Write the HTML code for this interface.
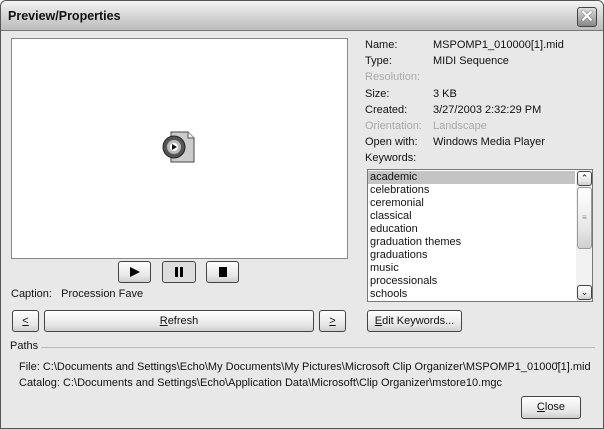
<!DOCTYPE html>
<html><head><style>
*{margin:0;padding:0;box-sizing:border-box}
body{width:604px;height:429px;overflow:hidden;background:#fff;font-family:"Liberation Sans",sans-serif;font-size:11px;color:#111}
.dlg{position:absolute;left:0;top:0;width:604px;height:429px;background:#e8e8e8;border:1px solid #555;border-radius:6px 6px 0 0}
.title{position:absolute;left:0;top:0;width:602px;height:30px;background:linear-gradient(#f4f4f4,#d0d0d0 60%,#bdbdbd);border-radius:6px 6px 0 0;border-bottom:1px solid #777}
.title span{position:absolute;left:7px;top:8px;font-weight:bold;font-size:12.5px}
.x{position:absolute;left:576px;top:6px;width:20px;height:20px;border:1px solid #444;border-radius:3px;background:linear-gradient(#ddd,#888);text-align:center;font-size:17px;line-height:18px;color:#fff;font-weight:bold;text-shadow:0 0 1px #000}
.abs{position:absolute;white-space:nowrap}
.btn{position:absolute;border:1px solid #444;border-radius:3px;background:linear-gradient(#fff,#e6e6e6 70%,#cfcfcf);text-align:center}
.g{color:#aaa}
</style></head><body><div class="dlg">
<div class="title"><span>Preview/Properties</span></div>
<div class="x">✕</div>
<div class="abs" style="left:10px;top:37px;width:337px;height:221px;background:#fff;border:1px solid #888"></div>
<svg class="abs" style="left:160px;top:128px" width="38" height="36">
<path d="M10 3h17l6 6v24H10z" fill="#ccc" stroke="#444"/><path d="M27 3v6h6" fill="#eee" stroke="#555"/>
<circle cx="13" cy="18" r="11" fill="#555" stroke="#222"/><circle cx="13" cy="18" r="7" fill="#bbb"/><circle cx="13" cy="18" r="4" fill="#fff"/><path d="M11 15l5 3-5 3z" fill="#111"/></svg>
<div class="btn" style="left:117px;top:260px;width:33px;height:22px"><svg width="31" height="20"><path d="M11 5l10 5-10 5z" fill="#000"/></svg></div>
<div class="btn" style="left:161px;top:260px;width:34px;height:22px;background:#ddd"><svg width="32" height="20"><rect x="12" y="5" width="3" height="10" fill="#000"/><rect x="17" y="5" width="3" height="10" fill="#000"/></svg></div>
<div class="btn" style="left:205px;top:260px;width:33px;height:22px"><svg width="31" height="20"><rect x="12" y="5" width="8" height="10" fill="#000"/></svg></div>
<div class="abs" style="left:10px;top:287px">Caption:&nbsp;&nbsp;&nbsp;Procession Fave</div>
<div class="btn" style="left:11px;top:309px;width:27px;height:22px;line-height:20px"><u>&lt;</u></div>
<div class="btn" style="left:43px;top:309px;width:270px;height:22px;line-height:20px"><u>R</u>efresh</div>
<div class="btn" style="left:318px;top:309px;width:27px;height:22px;line-height:20px"><u>&gt;</u></div>
<div class="btn" style="left:366px;top:309px;width:95px;height:22px;line-height:20px"><u>E</u>dit Keywords...</div>
<div class="abs" style="left:364px;top:36px;line-height:16.2px">Name:<br>Type:<br><span class="g">Resolution:</span><br>Size:<br>Created:<br><span class="g">Orientation:</span><br>Open with:</div>
<div class="abs" style="left:432px;top:36px;line-height:16.2px">MSPOMP1_010000[1].mid<br>MIDI Sequence<br>&nbsp;<br>3 KB<br>3/27/2003 2:32:29 PM<br><span class="g">Landscape</span><br>Windows Media Player</div>
<div class="abs" style="left:364px;top:151px">Keywords:</div>
<div class="abs" style="left:366px;top:168px;width:226px;height:133px;background:#fff;border:1px solid #777"></div>
<div class="abs" style="left:367px;top:170px;width:207px;height:13px;background:#c4c4c4"></div>
<div class="abs" style="left:369px;top:170px;line-height:13px">academic<br>celebrations<br>ceremonial<br>classical<br>education<br>graduation themes<br>graduations<br>music<br>processionals<br>schools</div>
<div class="abs" style="left:575px;top:169px;width:16px;height:131px;background:#f2f2f2"></div>
<div class="btn" style="left:576px;top:170px;width:15px;height:15px;font-size:9px;line-height:13px">⌃</div>
<div class="btn" style="left:576px;top:186px;width:15px;height:62px;border-color:#999;line-height:60px;font-size:8px;color:#888">≡</div>
<div class="btn" style="left:576px;top:284px;width:15px;height:15px;font-size:9px;line-height:12px">⌄</div>
<div class="abs" style="left:9px;top:339px">Paths</div>
<div class="abs" style="left:40px;top:346px;width:554px;height:1px;background:#bbb"></div>
<div class="abs" style="left:18px;top:358px;line-height:16px">File: C:\Documents and Settings\Echo\My Documents\My Pictures\Microsoft Clip Organizer\MSPOMP1_01000̆[1].mid<br>Catalog: C:\Documents and Settings\Echo\Application Data\Microsoft\Clip Organizer\mstore10.mgc</div>
<div class="btn" style="left:520px;top:395px;width:60px;height:23px;line-height:21px"><u>C</u>lose</div>
</div></body></html>
